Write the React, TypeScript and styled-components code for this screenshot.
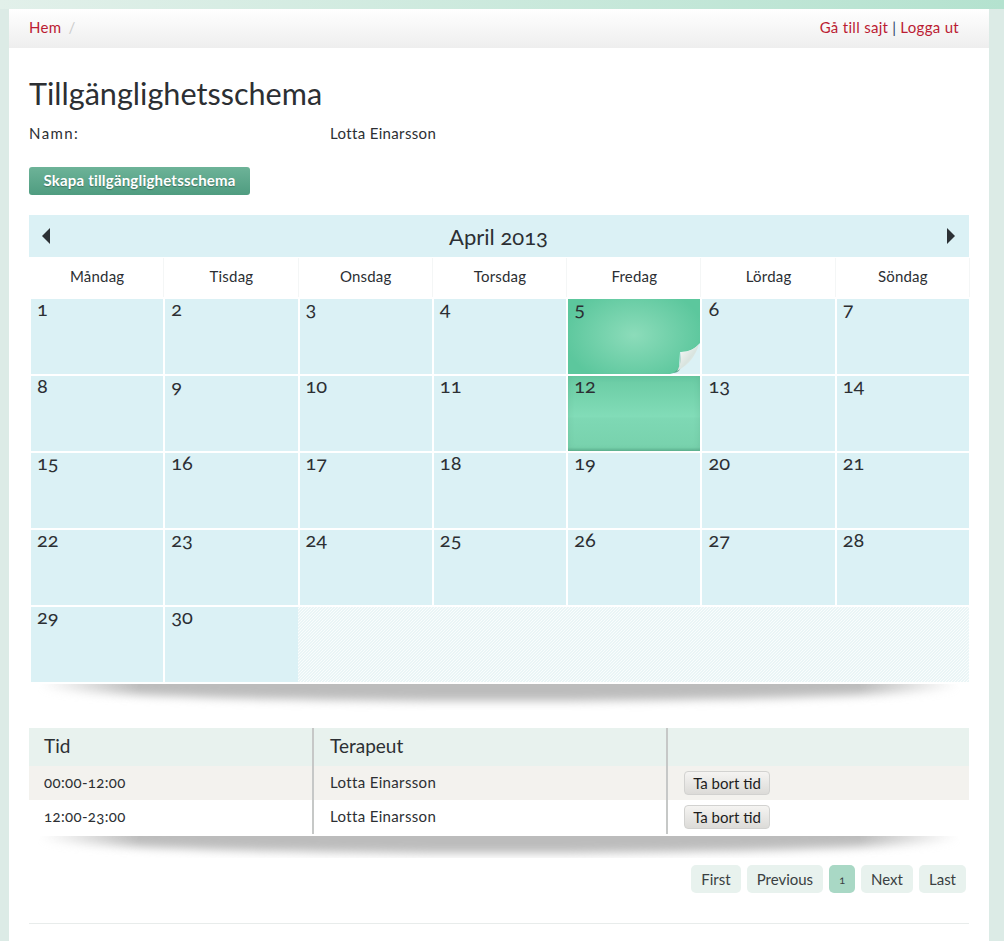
import React from 'react';
import styled, {createGlobalStyle} from 'styled-components';

const GlobalStyle = createGlobalStyle`
  html, body {
    margin: 0;
    padding: 0;
    height: 100%;
    overflow: hidden;
    background: #dcebe6;
  }
  body {
    font-family: "Lato", "Open Sans", sans-serif;
    font-variant-numeric: oldstyle-nums;
    color: #2c2f33;
  }
`

const TopBand = styled.div`
  height: 9px;
  background: linear-gradient(90deg, #e2f0ea, #b4e2cf);
`

const Page = styled.div`
  margin: 0 15px 0 9px;
  min-height: 932px;
  background: #fff;
`

const Breadcrumb = styled.nav`
  display: flex;
  justify-content: space-between;
  align-items: center;
  box-sizing: border-box;
  height: 39px;
  padding: 0 30px 3px 20px;
  background: linear-gradient(#fff, #eeeeee);
  font-size: 15px;
  letter-spacing: 0.3px;
`

const Crumbs = styled.div`
  display: flex;
  gap: 7px;
`

const RedLink = styled.a`
  color: #bb1c33;
`

const Slash = styled.span`
  color: #ccc;
`

const Divider = styled.span`
  color: #33406b;
  margin: 0 4px;
`

const Content = styled.main`
  padding: 26px 20px 0;
`

const Title = styled.h1`
  margin: 0;
  font-size: 30.6px;
  line-height: 40px;
  font-weight: 400;
`

const InfoRow = styled.div`
  display: grid;
  grid-template-columns: 301px 1fr;
  margin-top: 9px;
  font-size: 15px;
  line-height: 20px;
  letter-spacing: 0.35px;
`

const InfoLabel = styled.span`
  letter-spacing: 1.4px;
`

const CreateButton = styled.button`
  display: block;
  width: 221px;
  height: 28px;
  margin: 24px 0 20px;
  padding: 0 0 2px;
  border: 0;
  border-radius: 3px;
  background: linear-gradient(#6db398, #4f9c80);
  color: #fff;
  font: 700 15px "Lato", sans-serif;
  letter-spacing: 0.2px;
  text-shadow: 0 1px 1px rgba(0, 0, 0, 0.3);
`

const CalendarHead = styled.div`
  display: flex;
  justify-content: space-between;
  align-items: center;
  height: 42px;
  padding: 0 14px 0 13px;
  background: #dbf1f5;
`

const MonthTitle = styled.h2`
  margin: 0;
  font-size: 22px;
  font-weight: 400;
`

const Arrow = styled.span<{$dir: 'left' | 'right'}>`
  width: 0;
  height: 0;
  border-top: 8px solid transparent;
  border-bottom: 8px solid transparent;
  ${p => p.$dir === 'left' ? 'border-right: 8px solid #2c3135;' : 'border-left: 8px solid #2c3135;'}
`

const DayGrid = styled.div`
  display: grid;
  grid-template-columns: repeat(7, 1fr);
  gap: 2px;
  padding: 1px 0 0 2px;
`

const WeekDay = styled.div`
  box-sizing: border-box;
  height: 39px;
  padding-bottom: 3px;
  display: flex;
  align-items: center;
  justify-content: center;
  font-size: 15px;
  letter-spacing: 0.2px;
  box-shadow: 1px 0 0 #f4f6f6;
`

const Day = styled.div<{$tone?: 'plain' | 'peel' | 'glass'}>`
  position: relative;
  height: 75px;
  padding: 0 6px;
  box-sizing: border-box;
  font-size: 20px;
  line-height: 18px;
  background: ${p =>
    p.$tone === 'peel'
      ? 'radial-gradient(ellipse 70px 50px at 50% 48%, #8cdcba, #5cc79d)'
      : p.$tone === 'glass'
        ? 'linear-gradient(#69cba3, #82dcb8 54%, #7ed8b4 57%, #78d2ad 95%, #5fb492)'
        : '#dbf1f5'};
  box-shadow: ${p => (p.$tone === 'glass' ? 'inset 0 0 6px rgba(60, 130, 100, 0.18)' : 'none')};
`

const EmptyDays = styled.div`
  grid-column: span 5;
  margin-left: -2px;
  background-color: #fafdfd;
  background-image: linear-gradient(135deg, #eaf5f6 25%, transparent 25%, transparent 50%, #eaf5f6 50%, #eaf5f6 75%, transparent 75%);
  background-size: 3px 3px;
`

const PeelIcon = styled.svg`
  position: absolute;
  right: 0;
  bottom: 0;
`

const ShadowStrip = styled.div<{$height: number}>`
  position: relative;
  height: ${p => p.$height - 2}px;
  margin-top: 2px;
  overflow: hidden;
  mask-image: linear-gradient(90deg, transparent 8px, #000 110px, #000 830px, transparent 932px);
  &::before {
    content: '';
    position: absolute;
    left: 4px;
    right: 4px;
    top: -17px;
    height: 34px;
    border-radius: 50%;
    background: #bcbcbc;
    filter: blur(5px);
  }
`

const TableGrid = styled.div`
  display: grid;
  grid-template-columns: 285px 354px 1fr;
`

const Cell = styled.div<{$band: 'head' | 'even' | 'odd'; $last?: boolean}>`
  display: flex;
  align-items: center;
  box-sizing: border-box;
  height: ${p => (p.$band === 'head' ? 38 : 34)}px;
  padding: 0 0 3px 15px;
  font-size: ${p => (p.$band === 'head' ? 19 : 15)}px;
  letter-spacing: ${p => (p.$band === 'head' ? 0 : 0.35)}px;
  background: ${p => (p.$band === 'head' ? '#e8f2ee' : p.$band === 'even' ? '#f3f2ee' : '#fff')};
  border-right: ${p => (p.$last ? '0' : '2px solid #c6c8c7')};
`

const SpacedCell = styled(Cell)`
  padding-left: 16px;
`

const RemoveButton = styled.button`
  width: 86px;
  height: 24px;
  margin-top: 3px;
  padding: 0;
  border: 1px solid #d2d2d0;
  border-radius: 4px;
  background: linear-gradient(#f5f4f2, #dcdbd8);
  color: #1d1d1d;
  font: 15px "Lato", sans-serif;
`

const Pager = styled.div`
  display: flex;
  justify-content: flex-end;
  gap: 6px;
  padding: 7px 3px 30px 0;
`

const PageButton = styled.a<{$active?: boolean}>`
  display: flex;
  align-items: center;
  height: 28px;
  padding: 0 10px;
  border-radius: 5px;
  background: ${p => (p.$active ? '#a9d8c5' : '#e8f2ee')};
  color: #3a3f42;
  font-size: ${p => (p.$active ? 11 : 15)}px;
`

const Rule = styled.hr`
  margin: 0;
  border: 0;
  border-top: 1px solid #e8eceb;
`

const weekDays = ['Måndag', 'Tisdag', 'Onsdag', 'Torsdag', 'Fredag', 'Lördag', 'Söndag'];
const days = Array.from({length: 30}, (_, i) => i + 1);
const slots = ['00:00-12:00', '12:00-23:00'];

function App() {
  return (
    <>
      <GlobalStyle />
      <TopBand />
      <Page>
        <Breadcrumb>
          <Crumbs>
            <RedLink>Hem</RedLink>
            <Slash>/</Slash>
          </Crumbs>
          <div>
            <RedLink>Gå till sajt</RedLink>
            <Divider>|</Divider>
            <RedLink>Logga ut</RedLink>
          </div>
        </Breadcrumb>
        <Content>
          <Title>Tillgänglighetsschema</Title>
          <InfoRow>
            <InfoLabel>Namn:</InfoLabel>
            <span>Lotta Einarsson</span>
          </InfoRow>
          <CreateButton>Skapa tillgänglighetsschema</CreateButton>
          <CalendarHead>
            <Arrow $dir="left" />
            <MonthTitle>April 2013</MonthTitle>
            <Arrow $dir="right" />
          </CalendarHead>
          <DayGrid>
            {weekDays.map(d => <WeekDay key={d}>{d}</WeekDay>)}
            {days.map(d => (
              <Day key={d} $tone={d === 5 ? 'peel' : d === 12 ? 'glass' : 'plain'}>
                {d}
                {d === 5 && (
                  <PeelIcon width="32" height="31" viewBox="0 0 32 31">
                    <defs>
                      <linearGradient id="curl" x1="0" y1="0" x2="1" y2="1">
                        <stop offset="0" stopColor="#ffffff" />
                        <stop offset="0.55" stopColor="#d9e4df" />
                        <stop offset="1" stopColor="#f4f7f5" />
                      </linearGradient>
                    </defs>
                    <path d="M32 0V31H2C7 30 10 28 11 24L12 9H14C20 9 27 6 32 0Z" fill="#dbf1f5" />
                    <path d="M12 9V20C12 25 9 28 5 30C10 30 12 27 13 24Z" fill="#3d8f70" opacity="0.7" />
                    <path d="M13 9C20 9 27 6 31 1C28 12 21 22 9 28C12 24 13 18 13 9Z" fill="url(#curl)" />
                  </PeelIcon>
                )}
              </Day>
            ))}
            <EmptyDays />
          </DayGrid>
          <ShadowStrip $height={46} />
          <TableGrid>
            <Cell $band="head">Tid</Cell>
            <SpacedCell $band="head">Terapeut</SpacedCell>
            <Cell $band="head" $last />
            {slots.map((s, i) => (
              <React.Fragment key={s}>
                <Cell $band={i === 0 ? 'even' : 'odd'}>{s}</Cell>
                <SpacedCell $band={i === 0 ? 'even' : 'odd'}>Lotta Einarsson</SpacedCell>
                <SpacedCell $band={i === 0 ? 'even' : 'odd'} $last>
                  <RemoveButton>Ta bort tid</RemoveButton>
                </SpacedCell>
              </React.Fragment>
            ))}
          </TableGrid>
          <ShadowStrip $height={24} />
          <Pager>
            <PageButton>First</PageButton>
            <PageButton>Previous</PageButton>
            <PageButton $active>1</PageButton>
            <PageButton>Next</PageButton>
            <PageButton>Last</PageButton>
          </Pager>
          <Rule />
        </Content>
      </Page>
    </>
  )
};

export default App;
